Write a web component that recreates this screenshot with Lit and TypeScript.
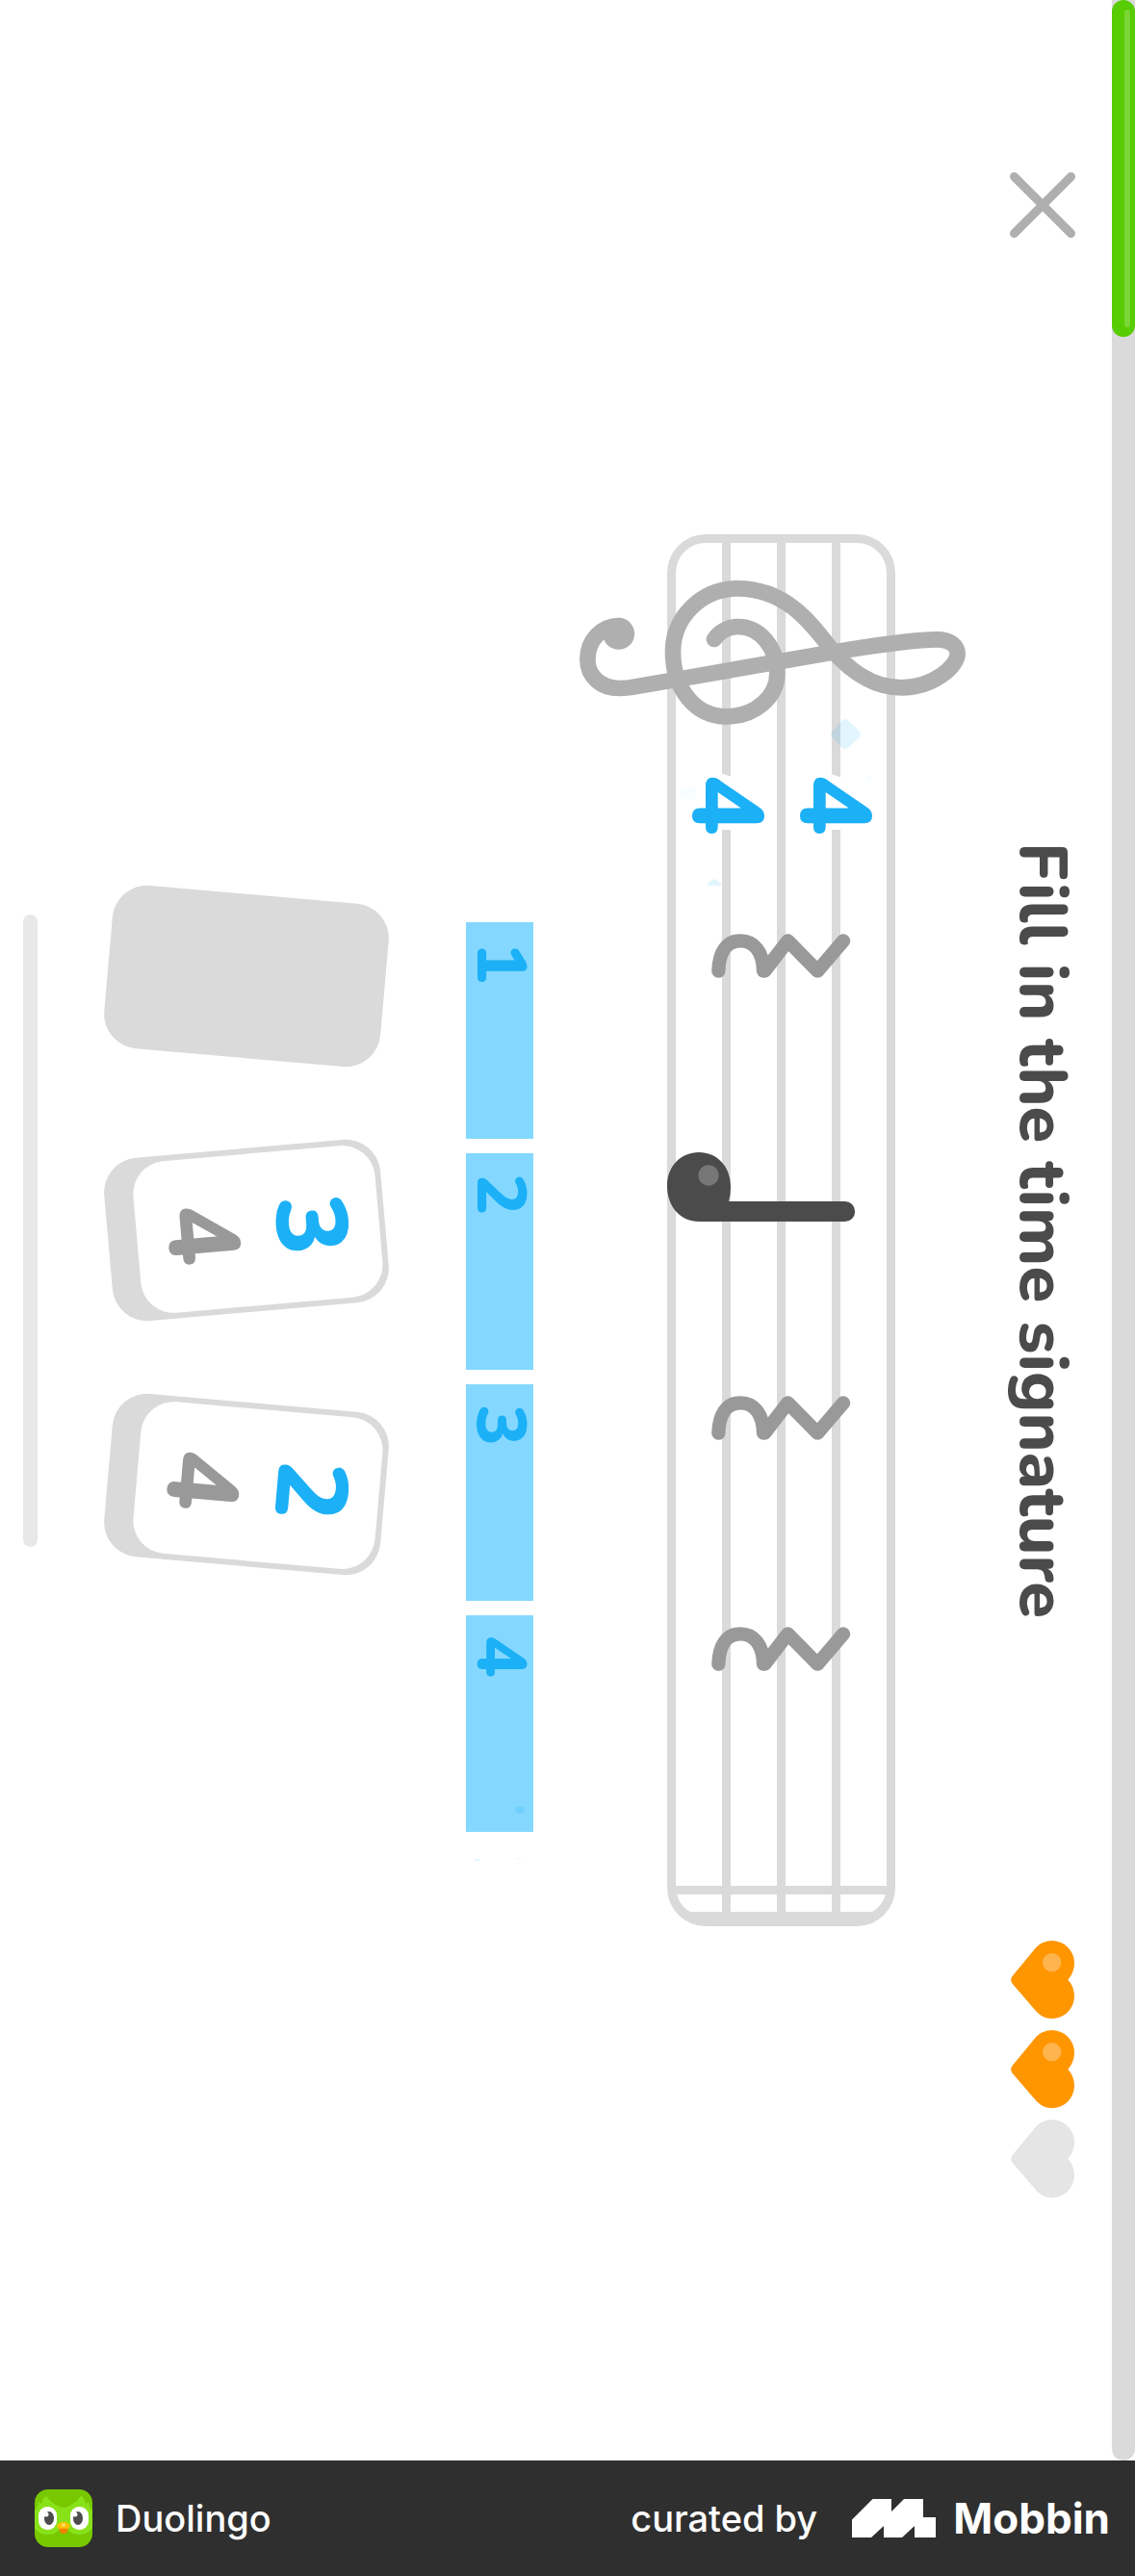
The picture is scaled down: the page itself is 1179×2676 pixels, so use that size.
import { LitElement, html, svg, css } from "lit";
import { customElement, property } from "lit/decorators.js";

const FONT = css`"Nunito", "Noto Sans", "Open Sans", sans-serif`;

interface Signature {
  top: number;
  bottom: number;
}

@customElement("lesson-progress")
export class LessonProgress extends LitElement {
  @property({ type: Number }) value = 0;

  static styles = css`
    :host {
      display: flex;
      width: 24px;
      border-radius: 0 0 12px 12px;
      background: #dadada;
    }
    .fill {
      box-sizing: border-box;
      flex: 1;
      display: flex;
      justify-content: flex-end;
      padding: 10px 5px 10px 0;
      border-radius: 12px;
      background: #58cc02;
    }
    .shine {
      width: 6px;
      border-radius: 3px;
      background: #79d635;
    }
  `;

  render() {
    return html`<div class="fill" style="height:${this.value}%"><div class="shine"></div></div>`;
  }
}

@customElement("lesson-header")
export class LessonHeader extends LitElement {
  static styles = css`
    :host {
      display: grid;
      grid-template-rows: 1fr auto 1fr;
      justify-items: center;
      width: 68px;
    }
    .close {
      align-self: start;
      margin: 179px 0 0;
      padding: 0;
      border: 0;
      background: none;
      display: flex;
    }
    .title {
      margin: 0;
      writing-mode: vertical-rl;
      font: 800 69px/68px ${FONT};
      color: #4b4b4b;
      white-space: nowrap;
    }
    .hearts {
      align-self: end;
      margin-bottom: 273px;
      display: flex;
      flex-direction: column;
      gap: 12px;
    }
    svg {
      display: block;
    }
    .full {
      fill: #ff9600;
    }
    .glow {
      fill: #ffb54d;
    }
    .empty {
      fill: #e5e5e5;
    }
  `;

  private heart(full: boolean) {
    return html`<svg width="66" height="81" viewBox="90 78 198 243" aria-hidden="true">
      <path
        class=${full ? "full" : "empty"}
        d="M268 200C281 186 288 167 288 147A70 69 0 0 0 218 78C198 78 180 87 168 100L95 188Q86 200 95 212L168 297C181 312 199 321 218 321A70 70 0 0 0 288 251C288 232 281 213 268 200Z"
      />
      ${full ? svg`<circle class="glow" cx="218" cy="146" r="29" />` : null}
    </svg>`;
  }

  render() {
    return html`
      <button class="close" aria-label="Close">
        <svg width="68" height="68" viewBox="0 0 68 68" fill="none" stroke="#afafaf" stroke-width="9" stroke-linecap="round">
          <path d="M4.500 4.500 63.500 63.500M63.500 4.500 4.500 63.500" />
        </svg>
      </button>
      <h1 class="title">Fill in the time signature</h1>
      <div class="hearts">${[true, true, false].map((f) => this.heart(f))}</div>
    `;
  }
}

@customElement("music-score")
export class MusicScore extends LitElement {
  static styles = css`
    :host {
      display: block;
      align-self: center;
    }
    .score {
      display: block;
      overflow: visible;
    }
    .line {
      fill: #dadada;
    }
    .frame {
      fill: #dadada;
      fill-rule: evenodd;
    }
    .stroke {
      fill: none;
      stroke-linecap: round;
      stroke-linejoin: round;
    }
    .clef {
      stroke: #afafaf;
      stroke-width: 50;
    }
    .dot {
      fill: #afafaf;
    }
    .rest {
      stroke: #999999;
      stroke-width: 43;
    }
    .note {
      fill: #4b4b4b;
    }
    .glow {
      fill: #777777;
    }
    .digit {
      font: 800 104px ${FONT};
      text-anchor: middle;
      fill: #1cb0f6;
    }
    .clear {
      fill: #ffffff;
    }
    .spark {
      fill: #1cb0f6;
      fill-opacity: 0.13;
    }
    .faint {
      fill-opacity: 0.03;
    }
  `;

  private rest(beat: number) {
    return svg`<path
      class="stroke rest"
      transform="translate(680 ${920 + beat * 240}) scale(.33333)"
      d="M199 266C201 206 226 172 267 172C309 172 338 205 339 266H343L415 172L508 266L588 172"
    />`;
  }

  private digit(value: number, baseline: number) {
    return svg`<g transform="translate(${baseline} 836) rotate(90)">
      <path class="clear" d="M-33 -28L-25 -52L-6 -76H26V0H-33Z" />
      <text class="digit">${value}</text>
    </g>`;
  }

  render() {
    return html`<svg class="score" width="408" height="1446" viewBox="600 555 408 1446" role="img" aria-label="Staff in four four time">
      <path
        class="frame"
        d="M733 555H890A40 40 0 0 1 930 595V1961A40 40 0 0 1 890 2001H733A40 40 0 0 1 693 1961V595A40 40 0 0 1 733 555ZM733 564A31 31 0 0 0 702 595V1959Q702 1977 717 1986H906Q921 1977 921 1959V595A31 31 0 0 0 890 564Z"
      />
      ${[750, 807, 864].map((x) => svg`<rect class="line" x=${x} y="560" width="9" height="1430" />`)}
      <rect class="line" x="698" y="1959" width="227" height="9" />
      <g transform="translate(590 540) scale(.33333)">
        <circle class="dot" cx="158" cy="355" r="49.500" />
        <path
          class="stroke clef"
          d="M160 330C105 330 61 375 61 435C61 490 105 525 160 525C175 525 190 524 205 521L835 411C930 396 1060 373 1150 373C1190 373 1214 392 1214 418C1214 455 1140 523 1040 523C940 523 870 460 822 405C760 325 680 214 530 214C415 214 327 305 327 412C327 530 400 613 493 613C585 613 652 550 652 480C652 400 600 333 530 333C500 333 472 348 456 372"
        />
      </g>
      ${this.digit(4, 832)} ${this.digit(4, 720)}
      <path class="spark" d="M874 749Q878 745 882 749L892 759Q896 763 892 767L882 776Q878 780 874 776L865 767Q861 763 865 759Z" />
      <path class="spark" d="M734 920Q736 916 742 913Q748 916 750 920Z" />
      <ellipse class="spark faint" cx="715" cy="824" rx="9" ry="7" />
      <ellipse class="spark faint" cx="903" cy="809" rx="3" ry="4" />
      ${[0, 2, 3].map((b) => this.rest(b))}
      <g transform="translate(680 920) scale(.33333)">
        <path class="note" d="M39 936C39 872 84 831 138 831C192 831 237 872 237 940Q237 962 231 984H593A31.500 31.500 0 0 1 593 1047H138C84 1047 39 1004 39 936Z" />
        <circle class="glow" cx="168" cy="903" r="32" />
      </g>
    </svg>`;
  }
}

@customElement("beat-track")
export class BeatTrack extends LitElement {
  static styles = css`
    :host {
      display: flex;
      flex-direction: column;
      gap: 15px;
      width: 70px;
      padding-top: 958px;
    }
    .beat {
      box-sizing: border-box;
      height: 225px;
      padding-top: 21px;
      writing-mode: vertical-rl;
      background: #84d8ff;
      color: #1cb0f6;
      font: 800 72px/68px ${FONT};
    }
    .sparks {
      display: block;
      fill: #1cb0f6;
    }
  `;

  render() {
    return html`
      ${[1, 2, 3, 4].map((n) => html`<div class="beat">${n}</div>`)}
      <svg class="sparks" width="70" height="20" viewBox="0 0 70 20" overflow="visible" aria-hidden="true">
        <ellipse cx="56" cy="-38" rx="5" ry="4" opacity="0.2" />
        <ellipse cx="12" cy="14" rx="3" ry="1" opacity="0.15" />
        <ellipse cx="55" cy="13" rx="3" ry="1" opacity="0.05" />
      </svg>
    `;
  }
}

@customElement("signature-choices")
export class SignatureChoices extends LitElement {
  static styles = css`
    :host {
      display: flex;
      flex-direction: column;
      justify-content: center;
      gap: 94px;
      width: 288px;
    }
    .slot,
    .card {
      box-sizing: border-box;
      height: 170px;
      width: 100%;
      border: 0;
      border-radius: 36px;
      background: #dadada;
      transform: rotate(5deg);
    }
    .card {
      display: flex;
      padding: 6px 6px 6px 30px;
    }
    .card.left {
      transform: rotate(-5deg);
    }
    .face {
      box-sizing: border-box;
      flex: 1;
      align-self: stretch;
      display: flex;
      flex-direction: row-reverse;
      align-items: center;
      justify-content: center;
      padding-right: 6px;
      border-radius: 34px;
      background: #ffffff;
    }
    .number {
      writing-mode: vertical-rl;
      font: 800 104px/113px ${FONT};
      color: #1cb0f6;
    }
    .lower {
      color: #999999;
    }
  `;

  private card(s: Signature, left: boolean) {
    return html`<button class="card ${left ? "left" : ""}">
      <span class="face"><span class="number">${s.top}</span><span class="number lower">${s.bottom}</span></span>
    </button>`;
  }

  render() {
    return html`
      <div class="slot"></div>
      ${this.card({ top: 3, bottom: 4 }, true)} ${this.card({ top: 2, bottom: 4 }, false)}
    `;
  }
}

@customElement("credit-bar")
export class CreditBar extends LitElement {
  static styles = css`
    :host {
      display: flex;
      align-items: center;
      box-sizing: border-box;
      height: 120px;
      padding: 0 26px 0 36px;
      background: #2f2f2f;
      color: #ffffff;
      font: 500 38px/48px "Inter", "Liberation Sans", sans-serif;
    }
    .app {
      margin-left: 24px;
      margin-right: auto;
    }
    .mark {
      margin: 0 18px 0 36px;
    }
    .brand {
      color: inherit;
      text-decoration: none;
      font-size: 44px;
      font-weight: 700;
    }
    svg {
      display: block;
      flex: none;
    }
  `;

  render() {
    return html`
      <svg width="60" height="60" viewBox="0 0 60 60" aria-hidden="true">
        <rect width="60" height="60" rx="14" fill="#78c800" />
        <path d="M0 22Q3 20 4 13Q6 15 7 15Q9 8 12 7Q14 9 16 12Q24 18 30 19Q36 18 44 12Q46 9 48 7Q51 8 53 15L56 13Q57 20 60 22V40Q56 47 47 47Q38 47 36 43Q30 39 24 43Q22 47 13 47Q4 47 0 40Z" fill="#89e219" />
        <rect x="4" y="18" width="19" height="24" rx="9" fill="#fff" />
        <rect x="37" y="18" width="19" height="24" rx="9" fill="#fff" />
        <ellipse cx="15" cy="30" rx="5" ry="7" fill="#4b4b4b" />
        <ellipse cx="45" cy="30" rx="5" ry="7" fill="#4b4b4b" />
        <circle cx="12" cy="26" r="2.500" fill="#fff" />
        <circle cx="42" cy="26" r="2.500" fill="#fff" />
        <path d="M25 40Q30 37 35 40Q34 46 30 46Q26 46 25 40Z" fill="#f48000" />
        <path d="M23 38Q25 34 30 34Q35 34 37 38Q36 41 33 41Q30 40 27 41Q24 41 23 38Z" fill="#ffc200" />
        <ellipse cx="30" cy="37" rx="2" ry="1.500" fill="#ffde7a" />
      </svg>
      <span class="app">Duolingo</span>
      <span>curated by</span>
      <svg class="mark" width="87" height="40" viewBox="0 0 87 40" aria-hidden="true">
        <path fill="#fff" d="M0 21.500 21.500 0H41V13L54 0H74V19H87V40H65V28L52 40H33V28L20 40H0Z" />
      </svg>
      <a class="brand" href="#">Mobbin</a>
    `;
  }
}

@customElement("app-root")
export class AppRoot extends LitElement {
  static styles = css`
    :host {
      display: block;
    }
    .page {
      display: flex;
      flex-direction: column;
      min-height: 100vh;
      background: #ffffff;
    }
    .lesson {
      flex: 1;
      display: flex;
      flex-direction: row-reverse;
    }
    .head {
      margin: 0 38px 0 41px;
    }
    .beats {
      margin: 0 46px 0 84px;
    }
    .home {
      align-self: center;
      width: 15px;
      height: 657px;
      margin: 0 auto 0 24px;
      border-radius: 8px;
      background: #e8e8e8;
    }
    .choices {
      margin-left: 72px;
    }
  `;

  render() {
    return html`<div class="page">
      <main class="lesson">
        <lesson-progress .value=${13.7}></lesson-progress>
        <lesson-header class="head"></lesson-header>
        <music-score></music-score>
        <beat-track class="beats"></beat-track>
        <signature-choices class="choices"></signature-choices>
        <div class="home"></div>
      </main>
      <credit-bar></credit-bar>
    </div>`;
  }
}
